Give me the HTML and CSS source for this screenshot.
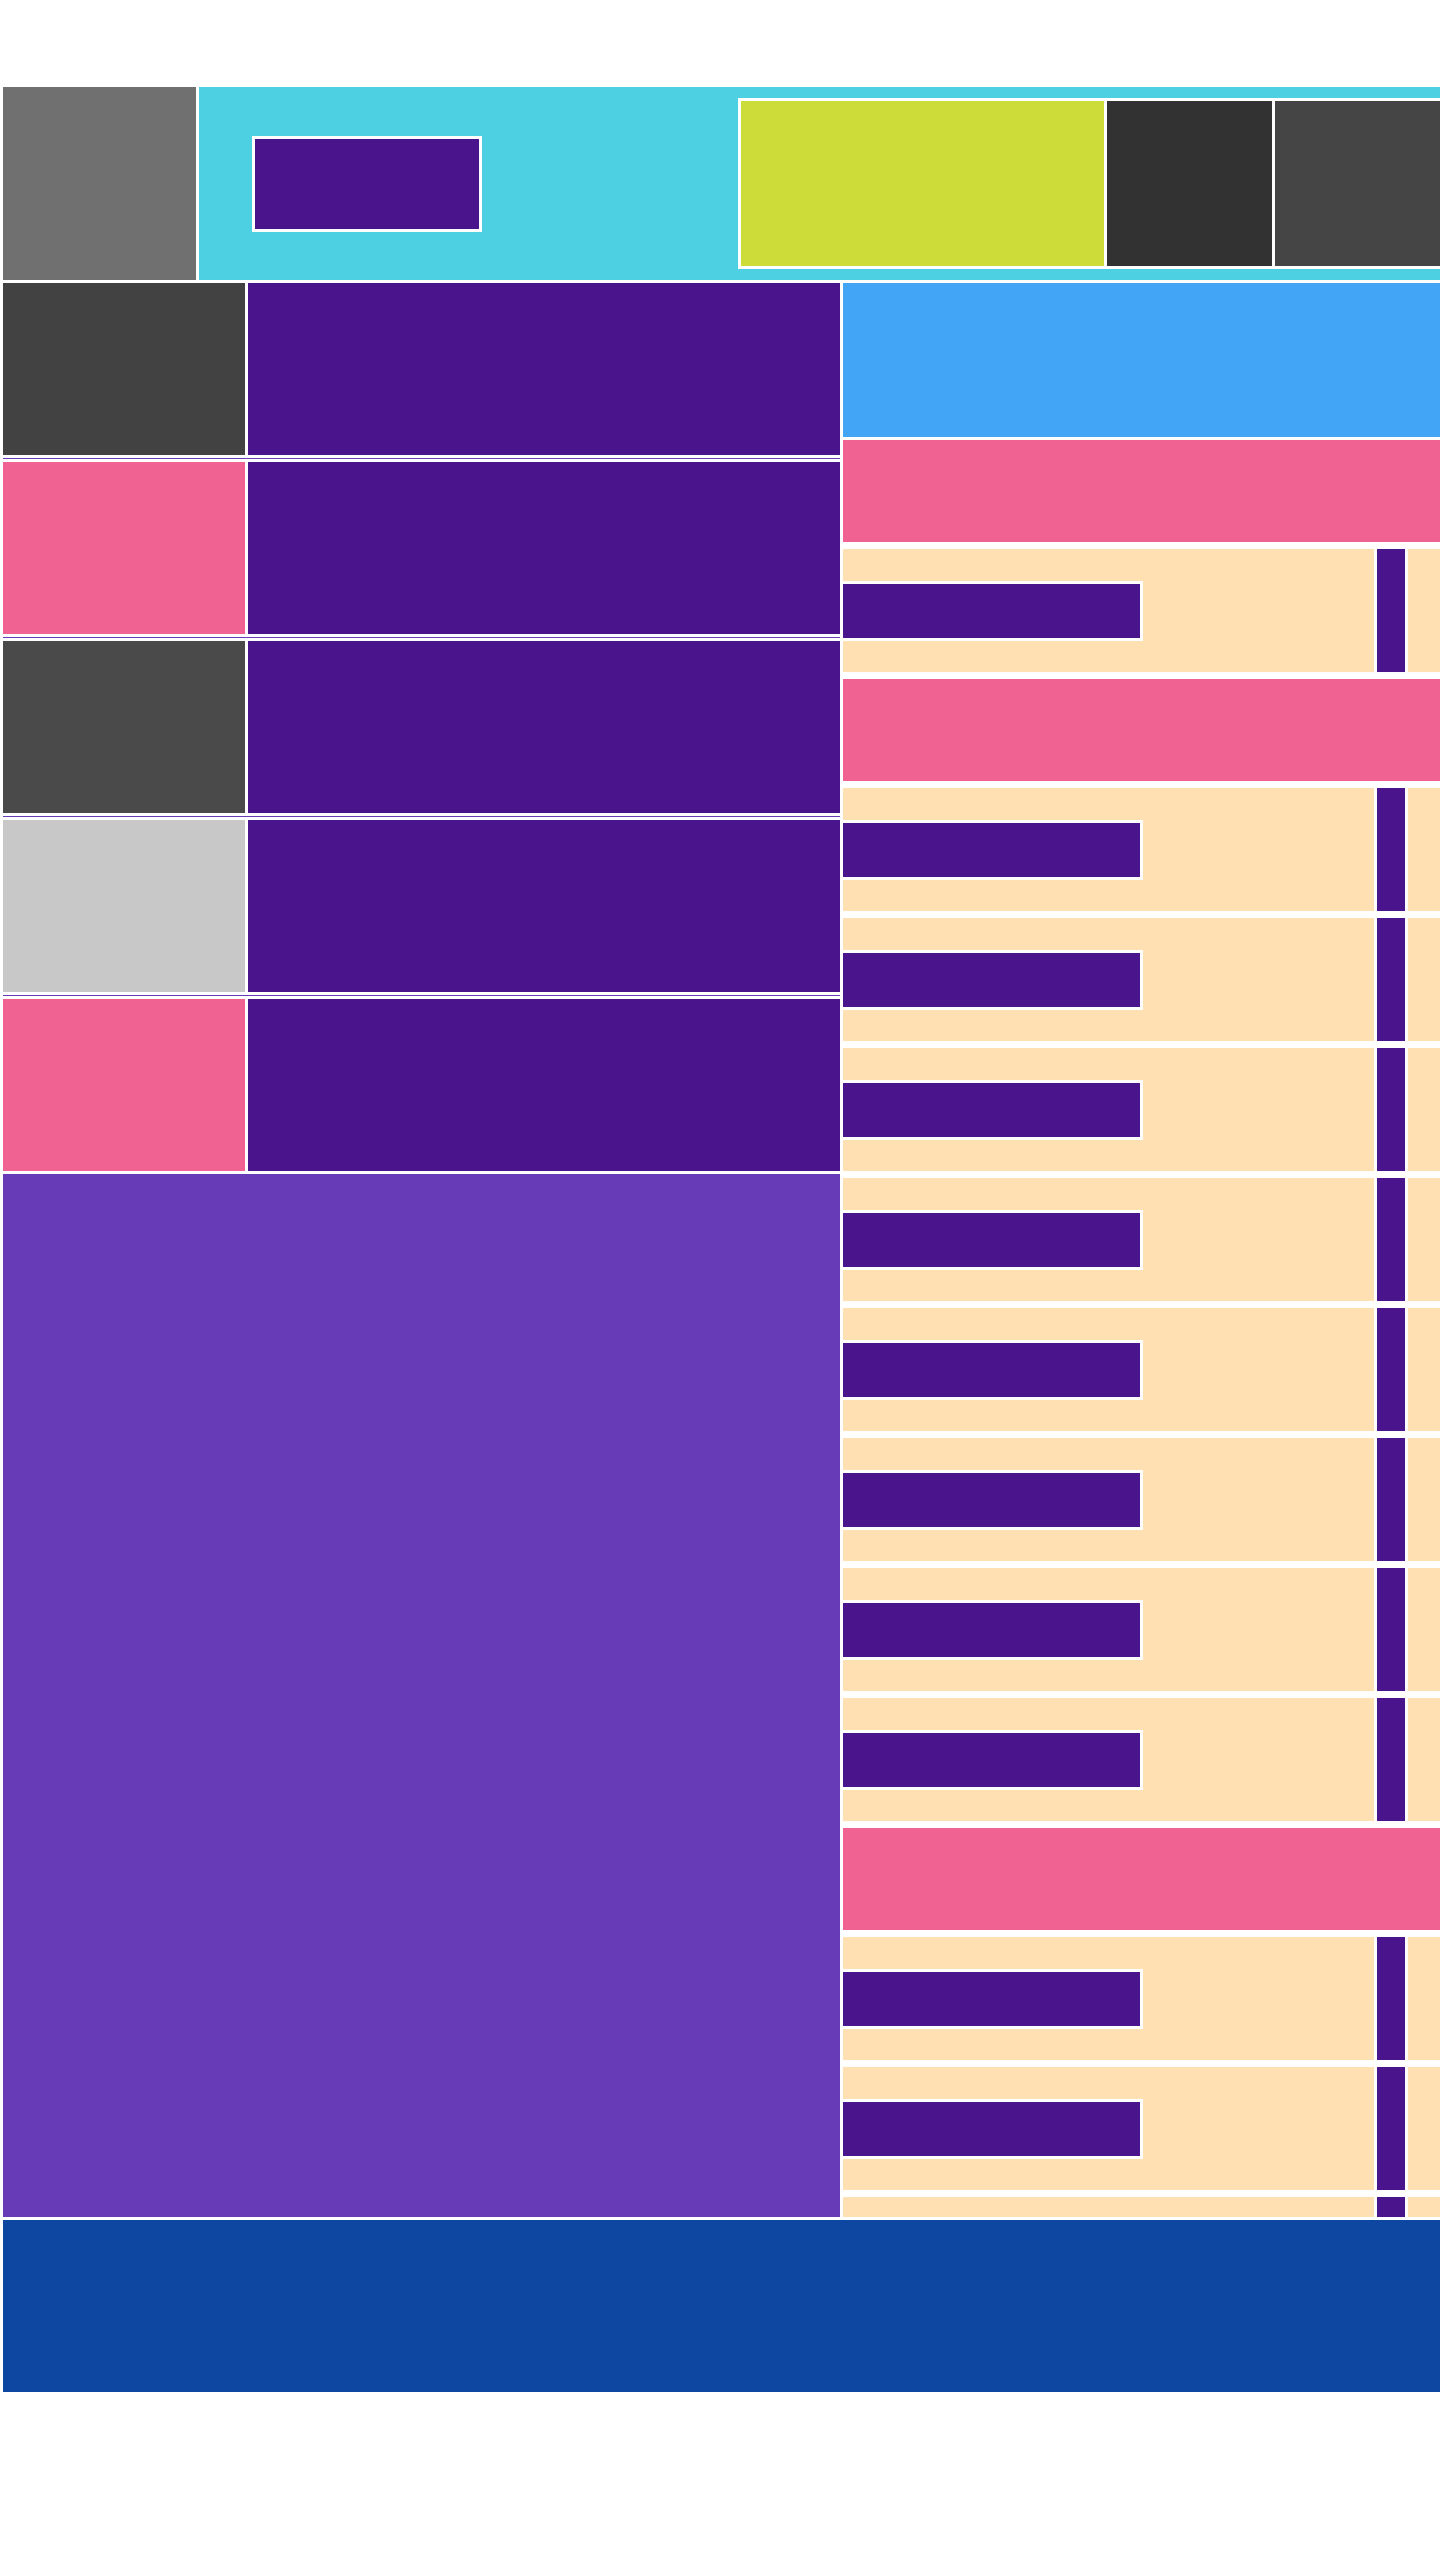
FILE: index.html
```html
<!DOCTYPE html>
<html lang="en">
<head>
  <meta charset="UTF-8">
  <meta name="viewport" content="width=device-width, initial-scale=1.0">
  <title>Layout</title>
  <link rel="stylesheet" href="styles.css">
</head>
<body>
  <header class="topbar">
    <div class="logo"></div>
    <nav class="nav">
      <div class="nav-btn"></div>
      <div class="nav-tools">
        <div class="tool tool-lime"></div>
        <div class="tool tool-dark"></div>
        <div class="tool tool-gray"></div>
      </div>
    </nav>
  </header>

  <main class="main">
    <section class="list">
      <div class="row">
        <div class="row-thumb thumb-dark"></div>
        <div class="row-body"></div>
      </div>
      <div class="divider"></div>
      <div class="row">
        <div class="row-thumb thumb-pink"></div>
        <div class="row-body"></div>
      </div>
      <div class="divider"></div>
      <div class="row">
        <div class="row-thumb thumb-mid"></div>
        <div class="row-body"></div>
      </div>
      <div class="divider"></div>
      <div class="row">
        <div class="row-thumb thumb-light"></div>
        <div class="row-body"></div>
      </div>
      <div class="divider"></div>
      <div class="row">
        <div class="row-thumb thumb-pink"></div>
        <div class="row-body"></div>
      </div>
      <div class="panel"></div>
    </section>

    <aside class="side">
      <div class="side-head"></div>
      <div class="feed">
        <div class="feed-title"></div>
        <div class="card"><div class="card-main"><div class="card-bar"></div></div><div class="card-tag"></div><div class="card-end"></div></div>

        <div class="feed-title"></div>
        <div class="card"><div class="card-main"><div class="card-bar"></div></div><div class="card-tag"></div><div class="card-end"></div></div>
        <div class="card"><div class="card-main"><div class="card-bar"></div></div><div class="card-tag"></div><div class="card-end"></div></div>
        <div class="card"><div class="card-main"><div class="card-bar"></div></div><div class="card-tag"></div><div class="card-end"></div></div>
        <div class="card"><div class="card-main"><div class="card-bar"></div></div><div class="card-tag"></div><div class="card-end"></div></div>
        <div class="card"><div class="card-main"><div class="card-bar"></div></div><div class="card-tag"></div><div class="card-end"></div></div>
        <div class="card"><div class="card-main"><div class="card-bar"></div></div><div class="card-tag"></div><div class="card-end"></div></div>
        <div class="card"><div class="card-main"><div class="card-bar"></div></div><div class="card-tag"></div><div class="card-end"></div></div>
        <div class="card"><div class="card-main"><div class="card-bar"></div></div><div class="card-tag"></div><div class="card-end"></div></div>

        <div class="feed-title"></div>
        <div class="card"><div class="card-main"><div class="card-bar"></div></div><div class="card-tag"></div><div class="card-end"></div></div>
        <div class="card"><div class="card-main"><div class="card-bar"></div></div><div class="card-tag"></div><div class="card-end"></div></div>
        <div class="card"><div class="card-main"><div class="card-bar"></div></div><div class="card-tag"></div><div class="card-end"></div></div>
      </div>
    </aside>
  </main>

  <footer class="footer"></footer>
</body>
</html>
```

FILE: styles.css
```css
body {
  background-color: #fff;
  font-family: "Liberation Sans", Arial, sans-serif;
  margin: 0;
  padding: 87px 0 0 3px;
  overflow-x: hidden;
}

/* top bar */
.topbar {
  display: flex;
  gap: 3px;
  height: 193px;
}

.logo {
  width: 193px;
  flex-shrink: 0;
  background-color: #707070;
}

.nav {
  flex: 1;
  display: flex;
  align-items: center;
  padding-left: 53px;
  background-color: #4dd0e1;
  overflow: hidden;
}

.nav-btn {
  width: 224px;
  height: 90px;
  flex-shrink: 0;
  border: 3px solid #fff;
  background-color: #4a148c;
}

.nav-tools {
  display: flex;
  gap: 3px;
  flex-shrink: 0;
  margin-left: 256px;
  padding: 3px;
  background-color: #fff;
}

.tool {
  width: 165px;
  height: 165px;
}

.tool-lime {
  width: 363px;
  background-color: #cddc39;
}

.tool-dark {
  background-color: #323232;
}

.tool-gray {
  background-color: #454545;
}

/* main area */
.main {
  display: flex;
  gap: 3px;
  height: 1934px;
  margin-top: 3px;
}

.list {
  width: 837px;
  flex-shrink: 0;
  display: flex;
  flex-direction: column;
}

.row {
  display: flex;
  gap: 3px;
  height: 172px;
  flex-shrink: 0;
}

.row-thumb {
  width: 242px;
}

.thumb-dark {
  background-color: #424242;
}

.thumb-pink {
  background-color: #f06292;
}

.thumb-mid {
  background-color: #4a4a4a;
}

.thumb-light {
  background-color: #c8c8c8;
}

.row-body {
  flex: 1;
  background-color: #4a148c;
}

.divider {
  height: 1px;
  margin: 3px 0;
  flex-shrink: 0;
  background-color: #673ab7;
}

.panel {
  flex: 1;
  margin-top: 3px;
  background-color: #673ab7;
}

/* side feed */
.side {
  flex: 1;
  display: flex;
  flex-direction: column;
  gap: 3px;
  overflow: hidden;
}

.side-head {
  height: 154px;
  flex-shrink: 0;
  background-color: #42a5f5;
}

.feed {
  display: flex;
  flex-direction: column;
  gap: 7px;
}

.feed-title {
  height: 102px;
  flex-shrink: 0;
  background-color: #f06292;
}

.card {
  display: flex;
  gap: 3px;
  height: 123px;
  flex-shrink: 0;
}

.card-main {
  flex: 1;
  display: flex;
  align-items: center;
  background-color: #ffe0b2;
}

.card-bar {
  width: 297px;
  height: 54px;
  border: 3px solid #fff;
  border-left: 0;
  background-color: #4a148c;
}

.card-tag {
  width: 28px;
  background-color: #4a148c;
}

.card-end {
  width: 32px;
  background-color: #ffe0b2;
}

.footer {
  height: 172px;
  margin-top: 3px;
  background-color: #0d47a1;
}
```
